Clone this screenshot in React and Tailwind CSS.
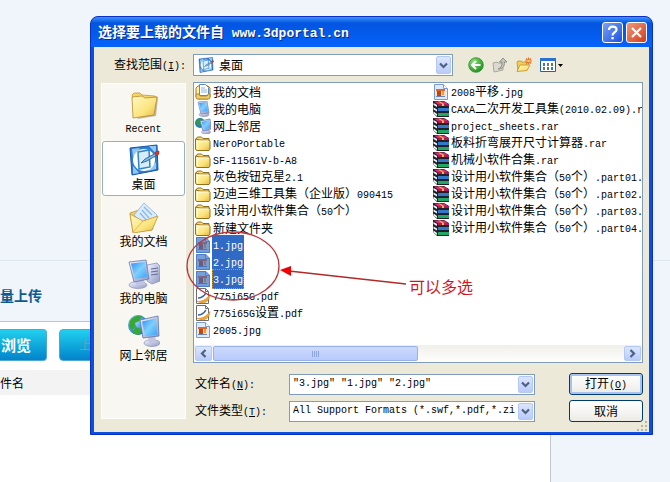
import { useState } from "react";
import clsx from "clsx";

const IconDefs = () => (
  <svg className="absolute h-0 w-0" aria-hidden="true">
    <defs>
      <linearGradient id="folder" x1="0" y1="0" x2="1" y2="1">
        <stop offset="0" stopColor="#fffac4" />
        <stop offset="0.6" stopColor="#fbe47e" />
        <stop offset="1" stopColor="#e3b63c" />
      </linearGradient>
      <linearGradient id="screen" x1="0" y1="0" x2="1" y2="1">
        <stop offset="0" stopColor="#2f8ff0" />
        <stop offset="0.5" stopColor="#7fd0ff" />
        <stop offset="1" stopColor="#3aa0f5" />
      </linearGradient>
      <linearGradient id="metal" x1="0" y1="0" x2="1" y2="1">
        <stop offset="0" stopColor="#f4f6ff" />
        <stop offset="1" stopColor="#8f97c4" />
      </linearGradient>
      <radialGradient id="globe" cx="0.35" cy="0.35" r="0.7">
        <stop offset="0" stopColor="#9be0ff" />
        <stop offset="1" stopColor="#1566c8" />
      </radialGradient>
      <radialGradient id="green" cx="0.35" cy="0.3" r="0.8">
        <stop offset="0" stopColor="#8fe07a" />
        <stop offset="1" stopColor="#178a17" />
      </radialGradient>
    </defs>
  </svg>
);

const RecentIcon = () => (
  <svg viewBox="0 0 32 32" className="h-8 w-8">
    <path d="M27 9l3 1-2 19-19 3z" fill="#8f8b7a" opacity="0.6" />
    <path d="M4 8l2-2h6l2 2 13 1-1 4-20 2z" fill="#f3d468" stroke="#c79a34" strokeWidth="0.8" />
    <path d="M4 10l10-1 3 2 12-1-3 18-21 3z" fill="url(#folder)" stroke="#b98c2c" strokeWidth="0.8" />
  </svg>
);

const DesktopIcon = ({ className = "h-8 w-8" }) => (
  <svg viewBox="0 0 32 32" className={className}>
    <path d="M2 4l27-3 1 25-26 5z" fill="#2f7ed4" stroke="#1a56a6" />
    <path d="M4 5l8-1-7 9zM21 2h7v8zM5 22l6 7-6 1zM28 18v7l-8 2z" fill="#8fc8f5" />
    <circle cx="16" cy="16" r="11" fill="#fdfdf0" />
    <path d="M10 8l11-2 1 17-11 2z" fill="#d6ecfc" stroke="#2f86cc" strokeWidth="1.5" />
    <path d="M13 19l4-4 11-6 1 2-10 6z" fill="#7eb6e4" stroke="#24598c" strokeWidth="0.8" />
    <path d="M27 8l4-1v3l-3 2z" fill="#d33b23" stroke="#8e2416" strokeWidth="0.5" />
  </svg>
);

const DocumentsIcon = () => (
  <svg viewBox="0 0 32 32" className="h-8 w-8">
    <path d="M2 12l9-3 3 2 13 1-3 17-19 2z" fill="#f2cf62" stroke="#c09437" strokeWidth="0.8" />
    <path d="M6 14L16 2l13 12-10 13z" fill="#d9ebfc" stroke="#8db3dc" strokeWidth="0.8" />
    <path d="M16 6l8 8M14 9l7 8M12 12l7 8" stroke="#8ab8ea" strokeWidth="1.3" />
    <path d="M2 13l13 7 15-5-6 14-19 3z" fill="url(#folder)" stroke="#c09437" strokeWidth="0.8" />
    <path d="M5 31l10-11" stroke="#d9ad47" strokeWidth="0.8" />
  </svg>
);

const ComputerIcon = () => (
  <svg viewBox="0 0 32 32" className="h-8 w-8">
    <path d="M19 7l10-2 3 3v15l-8 3-5-3z" fill="url(#metal)" stroke="#8087b3" strokeWidth="0.7" />
    <path d="M23 11l7-1M23 14l7-1M23 17l7-1" stroke="#636b98" />
    <ellipse cx="10" cy="27" rx="9" ry="3.5" fill="url(#metal)" stroke="#8d93b8" strokeWidth="0.7" />
    <path d="M8 20h8l1 7H8z" fill="#c0c5e2" />
    <path d="M1 4l17-2 3 19-15 3z" fill="url(#metal)" stroke="#6678ae" strokeWidth="0.8" />
    <path d="M3 5.5L17 4l2 15-12 2z" fill="url(#screen)" />
  </svg>
);

const NetworkIcon = () => (
  <svg viewBox="0 0 32 32" className="h-8 w-8">
    <circle cx="10" cy="10" r="10" fill="url(#globe)" />
    <path d="M2 6c3-5 8-6 12-5l-3 5-4 2 1 4-4 3-3-3zM8 12l5 2-1 6c-4 0-6-1-8-3z" fill="#37a834" />
    <ellipse cx="24" cy="28" rx="8" ry="3.5" fill="url(#metal)" stroke="#8d93b8" strokeWidth="0.7" />
    <path d="M20 20h7l1 8h-7z" fill="#c0c5e2" />
    <path d="M12 5l18-4 1 20-16 2z" fill="url(#metal)" stroke="#5d76b5" strokeWidth="0.8" />
    <path d="M14 6.5l14-3 1 16-12 2z" fill="url(#screen)" />
  </svg>
);

const FolderSmall = () => (
  <svg viewBox="0 0 16 16" className="h-4 w-4">
    <path d="M1 4l1.5-2h4L8 3.5h6V6H3z" fill="#f6da74" stroke="#94701a" />
    <path d="M0.5 4v10l1 1.500h12.500l1-1.500V6.500L14 5H5z" fill="url(#folder)" stroke="#94701a" />
    <path d="M2.5 14V7.5L4 6h9.5" fill="none" stroke="#fffbe0" />
  </svg>
);

const DocsSmall = () => (
  <svg viewBox="0 0 16 16" className="h-4 w-4">
    <path d="M1 4l2-2h10l2 2v9l-2 2H3l-2-2z" fill="url(#folder)" stroke="#a67c1e" />
    <path d="M4.5 0.5h6l3 3v8h-9z" fill="#fff" stroke="#5b8ac9" />
    <path d="M6 4h4M6 6h6M6 8h6" stroke="#8bb3e6" />
    <path d="M1 10h3l1 2h7l1-2h2v4l-1 1H2l-1-1z" fill="#f1ce64" stroke="#a67c1e" strokeWidth="0.8" />
  </svg>
);

const ComputerSmall = () => (
  <svg viewBox="0 0 16 16" className="h-4 w-4">
    <ellipse cx="9" cy="13.5" rx="5" ry="2" fill="url(#metal)" stroke="#8288ae" strokeWidth="0.6" />
    <path d="M3 1l9-1 2 12-8 1z" fill="url(#metal)" stroke="#6a86c0" strokeWidth="0.7" />
    <path d="M4 2l7-1 1.500 9-6 1z" fill="url(#screen)" />
  </svg>
);

const NetworkSmall = () => (
  <svg viewBox="0 0 16 16" className="h-4 w-4">
    <circle cx="5" cy="5" r="5" fill="#1f7cc0" />
    <path d="M1 3c2-3 5-3 7-2L6 4l-1 5-3-2z" fill="#2f9e39" />
    <ellipse cx="11" cy="14" rx="4.5" ry="2" fill="url(#metal)" stroke="#8288ae" strokeWidth="0.6" />
    <path d="M5 3l10-2 1 10-8 2z" fill="url(#metal)" stroke="#5d76b5" strokeWidth="0.7" />
    <path d="M6.5 4l8-2 0.5 8-6 1.500z" fill="url(#screen)" />
  </svg>
);

const JpgIcon = ({ selected }) => (
  <svg viewBox="0 0 16 16" className="h-4 w-4">
    <path d="M1.5 0.5h9l4 4v11h-13z" fill="#dfebfd" stroke="#7b9bd0" />
    <path d="M10.5 0.5v4h4" fill="#fff" stroke="#7b9bd0" />
    <path d="M3 5h9v8H3z" fill="#f8e2b0" />
    <path d="M3 5h9v2H3z" fill="#e0662a" />
    <path d="M4 7h4v5H4z" fill="#c2421f" />
    <path d="M9 7h2v4H9z" fill="#ef9a3a" />
    <path d="M3 12h9v1H3z" fill="#6a84b8" />
    {selected && <path d="M1 0h10l4 4v12H1z" fill="#316ac5" opacity="0.6" />}
  </svg>
);

const PdfIcon = () => (
  <svg viewBox="0 0 16 16" className="h-4 w-4">
    <path d="M1.5 0.5h9l3 3v12h-12z" fill="#fff" stroke="#6e6e6e" />
    <path d="M10.5 0.5v3h3" fill="none" stroke="#6e6e6e" />
    <path d="M3 10c4 0 6-2 8-5" fill="none" stroke="#3a62b4" strokeWidth="1.4" />
    <path d="M2 13.5c5 0 9-2 13-7 0 5-4 8.500-8 8.500z" fill="#f2a533" stroke="#cc7c14" strokeWidth="0.5" />
  </svg>
);

const RarIcon = () => (
  <svg viewBox="0 0 16 16" className="h-4 w-4">
    <path d="M0 0h11l5 3v13H4l-4-4z" fill="#20202a" />
    <path d="M1 0.5h10l4.5 3H5z" fill="#e02a78" />
    <path d="M5 3h11v2H5z" fill="#b3185a" />
    <path d="M5 7h11v3H5z" fill="#3478cc" />
    <path d="M5 12h11v3H5z" fill="#22a866" />
    <path d="M0.500 2L4 4v2L0.500 4zM0.500 6.500L4 8.500v2L0.500 8.500zM0.500 10.500L4 13v2L0.500 12.500z" fill="#f4f4f4" />
    <path d="M5 0.500h2l4 2.500v2H9V3z" fill="#e8c23a" />
  </svg>
);

const icons = {
  docs: DocsSmall,
  computer: ComputerSmall,
  network: NetworkSmall,
  folder: FolderSmall,
  jpg: JpgIcon,
  pdf: PdfIcon,
  rar: RarIcon,
};

const places = [
  { name: "Recent", Icon: RecentIcon },
  { name: "桌面", Icon: DesktopIcon },
  { name: "我的文档", Icon: DocumentsIcon },
  { name: "我的电脑", Icon: ComputerIcon },
  { name: "网上邻居", Icon: NetworkIcon },
];

const columns = [
  [
    { name: "我的文档", type: "docs" },
    { name: "我的电脑", type: "computer" },
    { name: "网上邻居", type: "network" },
    { name: "NeroPortable", type: "folder" },
    { name: "SF-11561V-b-A8", type: "folder" },
    { name: "灰色按钮克星2.1", type: "folder" },
    { name: "迈迪三维工具集（企业版）090415", type: "folder" },
    { name: "设计用小软件集合（50个）", type: "folder" },
    { name: "新建文件夹", type: "folder" },
    { name: "1.jpg", type: "jpg", selected: true },
    { name: "2.jpg", type: "jpg", selected: true },
    { name: "3.jpg", type: "jpg", selected: true, focused: true },
    { name: "775i65G.pdf", type: "pdf" },
    { name: "775i65G设置.pdf", type: "pdf" },
    { name: "2005.jpg", type: "jpg" },
  ],
  [
    { name: "2008平移.jpg", type: "jpg" },
    { name: "CAXA二次开发工具集(2010.02.09).r", type: "rar" },
    { name: "project_sheets.rar", type: "rar" },
    { name: "板料折弯展开尺寸计算器.rar", type: "rar" },
    { name: "机械小软件合集.rar", type: "rar" },
    { name: "设计用小软件集合（50个）.part01.", type: "rar" },
    { name: "设计用小软件集合（50个）.part02.", type: "rar" },
    { name: "设计用小软件集合（50个）.part03.", type: "rar" },
    { name: "设计用小软件集合（50个）.part04.", type: "rar" },
  ],
];

// Latin runs are set in a half-width mono face, so two letters fill one CJK cell
const Text = ({ children, size = "text-[10px]" }) =>
  children.split(/([\x20-\x7e]+)/).map((part, i) =>
    i % 2 ? (
      <span key={i} className={clsx("font-['Liberation_Mono',monospace]", size)}>
        {part}
      </span>
    ) : (
      part
    )
  );

// Label with its access key underlined, e.g. 文件名(N):
const KeyLabel = ({ text, accessKey, end = ":" }) => (
  <>
    {text}
    <span className="font-['Liberation_Mono',monospace] text-[10px]">
      (<u>{accessKey}</u>){end}
    </span>
  </>
);

const Chevron = ({ className }) => (
  <svg viewBox="0 0 9 9" className={clsx("h-[9px] w-[9px]", className)}>
    <path d="M1 2.5L4.5 6 8 2.5" fill="none" stroke="#4d6185" strokeWidth="2.2" />
  </svg>
);

const arrowBox =
  "flex shrink-0 items-center justify-center rounded-xs border border-[#b4c8f6] bg-linear-to-b from-[#dbe5fe] to-[#b9cbf8]";

const FileItem = ({ file }) => {
  const Icon = icons[file.type];
  return (
    <li className="flex h-[17px] items-center gap-px" aria-selected={!!file.selected} role="option">
      <span className="shrink-0">
        <Icon selected={file.selected} />
      </span>
      <span
        className={clsx(
          "pl-px leading-[17px] whitespace-pre",
          file.selected && "bg-[#316ac5] pr-px text-white",
          file.focused && "outline-1 -outline-offset-1 outline-dotted outline-[#ce953a]"
        )}
      >
        <Text>{file.name}</Text>
      </span>
    </li>
  );
};

const TitleBar = () => (
  <div className="flex h-[30px] items-center rounded-t-[7px] bg-linear-to-b from-[#3c92fb] via-[#0355e0] via-20% to-[#0462fb] pr-[5px] pl-[7px]">
    <h1 className="flex-1 text-[14px] leading-5 font-bold whitespace-pre text-white [text-shadow:1px_1px_#0b2a86]">
      <Text size="text-[13px]">选择要上载的文件自 www.3dportal.cn</Text>
    </h1>
    <div className="flex gap-[3px]">
      <button
        type="button"
        aria-label="帮助"
        className="h-[21px] w-[21px] rounded-[3px] border border-white bg-linear-to-br from-[#7d9ff5] to-[#1a4fe0]"
      >
        <svg viewBox="0 0 19 19" className="h-[19px] w-[19px]">
          <path d="M6 7c0-4.500 7.500-4.500 7.500-0.500 0 3-4 2.500-4 6" fill="none" stroke="#fff" strokeWidth="2.2" />
          <path d="M8.400 14h2.300v2.300H8.400z" fill="#fff" />
        </svg>
      </button>
      <button
        type="button"
        aria-label="关闭"
        className="h-[21px] w-[21px] rounded-[3px] border border-white bg-linear-to-br from-[#f0967a] to-[#cf3a12]"
      >
        <svg viewBox="0 0 19 19" className="h-[19px] w-[19px]">
          <path d="M5 5l9 9M14 5l-9 9" stroke="#fff" strokeWidth="2.2" />
        </svg>
      </button>
    </div>
  </div>
);

const Toolbar = () => (
  <div className="flex items-center gap-2">
    <button type="button" aria-label="后退">
      <svg viewBox="0 0 16 16" className="h-4 w-4">
        <circle cx="8" cy="8" r="7.3" fill="url(#green)" stroke="#2c8f2c" strokeWidth="0.8" />
        <path d="M12.5 8h-8M8 4L4 8l4 4" fill="none" stroke="#fff" strokeWidth="2" />
      </svg>
    </button>
    <button type="button" aria-label="向上一级">
      <svg viewBox="0 0 16 16" className="h-4 w-4">
        <path d="M1 6l4-1 1 1h5v7l-9 2z" fill="#dcdad0" stroke="#a3a196" strokeWidth="0.9" />
        <path d="M6 12c3-1 4-3 4-7H7.500L11 1l4 4h-2.500c0 5-2 7-6.500 7z" fill="#c6c4ba" stroke="#8d8b82" strokeWidth="0.9" />
      </svg>
    </button>
    <button type="button" aria-label="新建文件夹">
      <svg viewBox="0 0 16 16" className="h-4 w-4">
        <path d="M1 5l1-1h3l1 1h5v3l-9 6z" fill="#f1cc5c" stroke="#c39a36" strokeWidth="0.9" />
        <path d="M1 14.500L4 8h10l-3 5.500z" fill="url(#folder)" stroke="#c39a36" strokeWidth="0.9" />
        <path d="M12.500 0.500v7M9 4h7M10 1.500l5 5M15 1.500l-5 5" stroke="#ea6a28" strokeWidth="1.1" />
        <circle cx="12.5" cy="4" r="1.3" fill="#ffd94a" />
      </svg>
    </button>
    <button type="button" aria-label="查看" className="flex items-center gap-[2px]">
      <svg viewBox="0 0 16 16" className="h-4 w-4">
        <path d="M0.500 1.500h15v13H0.500z" fill="#fff" stroke="#1f5fb5" />
        <path d="M0 1h16v3H0z" fill="#2b72cf" />
        <path d="M3 6h2v3H3zM11 10h2v3h-2z" fill="#2e7ad1" />
        <path d="M7 6h2v3H7zM3 10h2v3H3z" fill="#777" />
        <path d="M11 6h2v3h-2zM7 10h2v3H7z" fill="#37963c" />
      </svg>
      <svg viewBox="0 0 5 3" className="h-[3px] w-[5px]">
        <path d="M0 0h5L2.500 3z" fill="#000" />
      </svg>
    </button>
  </div>
);

const Scrollbar = () => (
  <div className="flex h-[17px] items-center gap-px bg-linear-to-b from-[#f0efea] to-[#fefefb] px-px">
    <button type="button" aria-label="向左滚动" className={clsx(arrowBox, "h-[15px] w-[17px]")}>
      <Chevron className="rotate-90" />
    </button>
    <div className="flex h-[15px] w-[205px] items-center justify-center gap-px rounded-xs border border-[#98b1e8] bg-linear-to-b from-[#ccd9fd] to-[#b8cafb]">
      {[0, 1, 2, 3].map((i) => (
        <span key={i} className="h-[6px] w-px border-r border-[#8ca5e0] bg-[#eef4fe]" />
      ))}
    </div>
    <button type="button" aria-label="向右滚动" className={clsx(arrowBox, "ml-auto h-[15px] w-[17px]")}>
      <Chevron className="-rotate-90" />
    </button>
  </div>
);

const Places = ({ current, onPick }) => (
  <nav className="mt-px mb-[3px] flex w-[85px] shrink-0 flex-col gap-[2px] border border-[#fdfdfa] bg-[#f8f7f2]">
    {places.map(({ name, Icon }) => (
      <button
        key={name}
        type="button"
        onClick={() => onPick(name)}
        className={clsx(
          "flex h-[55px] flex-col items-center rounded-[3px] border pt-[2px]",
          current === name ? "border-[#98b0c4] bg-white" : "border-transparent"
        )}
      >
        <Icon />
        <span className="leading-4">
          <Text>{name}</Text>
        </span>
      </button>
    ))}
  </nav>
);

const FileDialog = () => {
  const [place, setPlace] = useState("桌面");
  const [fileName, setFileName] = useState('"3.jpg" "1.jpg" "2.jpg"');

  return (
    <section
      role="dialog"
      className="absolute top-4 right-[17px] left-[90px] rounded-t-lg border border-[#0a2fc4] bg-[#0a50e0]"
    >
      <TitleBar />
      <div className="relative mx-[3px] mb-[2px] bg-[#ece9d8] pt-[7px] pr-[6px] pb-[10px] pl-[7px]">
        <div className="mb-[6px] flex items-center">
          <label htmlFor="look-in" className="w-[92px] pl-[13px]">
            <KeyLabel text="查找范围" accessKey="I" />
          </label>
          <div className="mr-[15px] flex h-[22px] w-[260px] items-center border border-[#7f9db9] bg-white pr-px pl-1">
            <DesktopIcon className="h-4 w-4 shrink-0" />
            <select
              id="look-in"
              value={place}
              onChange={(e) => setPlace(e.target.value)}
              className="h-5 min-w-0 flex-1 appearance-none pl-[5px]"
            >
              {places.map((p) => (
                <option key={p.name}>{p.name}</option>
              ))}
            </select>
            <span className={clsx(arrowBox, "pointer-events-none h-[18px] w-[15px]")}>
              <Chevron />
            </span>
          </div>
          <Toolbar />
        </div>

        <div className="flex gap-[7px]">
          <Places current={place} onPick={setPlace} />

          <div className="min-w-0 flex-1">
            <div className="border border-[#7f9db9] bg-white">
              <div
                role="listbox"
                aria-multiselectable="true"
                className="grid grid-cols-[238px_minmax(0,1fr)] overflow-hidden pb-[7px] pl-px"
              >
                {columns.map((files, i) => (
                  <ul key={i}>
                    {files.map((file) => (
                      <FileItem key={file.name} file={file} />
                    ))}
                  </ul>
                ))}
              </div>
              <Scrollbar />
            </div>

            <form className="flex flex-col gap-[5px] pt-[10px]" onSubmit={(e) => e.preventDefault()}>
              <div className="flex items-center">
                <label htmlFor="file-name" className="w-24 pl-[2px]">
                  <KeyLabel text="文件名" accessKey="N" />
                </label>
                <div className="flex h-[21px] w-[246px] items-center border border-[#7f9db9] bg-white px-px">
                  <input
                    id="file-name"
                    value={fileName}
                    onChange={(e) => setFileName(e.target.value)}
                    className="min-w-0 flex-1 pl-[2px] font-['Liberation_Mono',monospace] text-[10px] outline-none"
                  />
                  <button type="button" aria-label="文件名列表" className={clsx(arrowBox, "h-[17px] w-[15px]")}>
                    <Chevron />
                  </button>
                </div>
                <button
                  type="submit"
                  className="ml-auto h-[22px] w-[74px] rounded-[3px] border border-[#003c74] bg-linear-to-b from-white to-[#ecebe5] shadow-[inset_0_0_0_2px_#a9c3f0]"
                >
                  <KeyLabel text="打开" accessKey="O" end="" />
                </button>
              </div>
              <div className="flex items-center">
                <label htmlFor="file-type" className="w-24 pl-[2px]">
                  <KeyLabel text="文件类型" accessKey="T" />
                </label>
                <div className="flex h-[21px] w-[246px] items-center border border-[#7f9db9] bg-white px-px">
                  <select
                    id="file-type"
                    className="min-w-0 flex-1 appearance-none overflow-hidden pl-[2px] font-['Liberation_Mono',monospace] text-[10px]"
                  >
                    <option>All Support Formats (*.swf,*.pdf,*.zi</option>
                  </select>
                  <span className={clsx(arrowBox, "pointer-events-none h-[17px] w-[15px]")}>
                    <Chevron />
                  </span>
                </div>
                <button
                  type="button"
                  className="ml-auto h-[22px] w-[74px] rounded-[3px] border border-[#003c74] bg-linear-to-b from-white to-[#ecebe5]"
                >
                  取消
                </button>
              </div>
            </form>
          </div>
        </div>

        <svg viewBox="0 0 12 12" className="absolute right-0 bottom-0 h-3 w-3" aria-hidden="true">
          <path d="M8 1h2v2H8zM8 5h2v2H8zM8 9h2v2H8zM4 5h2v2H4zM4 9h2v2H4zM0 9h2v2H0z" fill="#b8b4a2" />
        </svg>
      </div>
    </section>
  );
};

// Hand-drawn hint: circle round the selected files and an arrow from the note
const Annotation = () => (
  <div className="pointer-events-none absolute top-[230px] left-[185px] flex">
    <svg viewBox="0 0 222 72" className="h-[72px] w-[222px]">
      <ellipse cx="48" cy="36" rx="46" ry="34" fill="none" stroke="#b8383c" strokeWidth="1.3" />
      <path d="M104 41l117 13" stroke="#b02a2a" strokeWidth="1.3" />
      <path d="M95 40l11-4v10z" fill="#f00000" />
    </svg>
    <p className="mt-[44px] ml-[2px] text-[16px] leading-6 text-[#d4141c]">可以多选</p>
  </div>
);

const UploadPage = () => (
  <div className="flex min-h-screen flex-col bg-[#eff5fa]">
    <div className="h-[261px] border-b border-[#dfe7ee]" />
    <main className="mr-[119px] flex flex-1 flex-col border-r border-[#c3c9cf] bg-white">
      <h2 className="h-[61px] border-b border-[#bfc4c8] bg-[#eff5fa] pt-6 text-[14px] leading-5 font-bold text-[#0b5a92]">
        量上传
      </h2>
      <div className="flex gap-3 pt-[7px]">
        <button
          type="button"
          className="h-8 w-[47px] rounded-r-sm border border-l-0 border-[#4fa9cf] bg-linear-to-b from-[#22d0ee] to-[#0583cb] pr-[14px] text-[15px] font-bold text-white"
        >
          浏览
        </button>
        <button
          type="button"
          disabled
          className="h-8 w-[80px] rounded-sm border border-[#4fa9cf] bg-linear-to-b from-[#22d0ee] to-[#0583cb] pl-[19px] text-left text-[#6f9fae]"
        >
          上传
        </button>
      </div>
      <table className="mt-[9px] w-full text-left">
        <thead>
          <tr className="h-[25px] bg-[#f3f3f3]">
            <th className="p-0 font-normal">件名</th>
          </tr>
        </thead>
      </table>
    </main>
  </div>
);

export default function App() {
  return (
    <div className="relative overflow-hidden font-['Noto_Sans_CJK_SC',sans-serif] text-[12px] leading-4 text-black">
      <IconDefs />
      <UploadPage />
      <FileDialog />
      <Annotation />
    </div>
  );
}
